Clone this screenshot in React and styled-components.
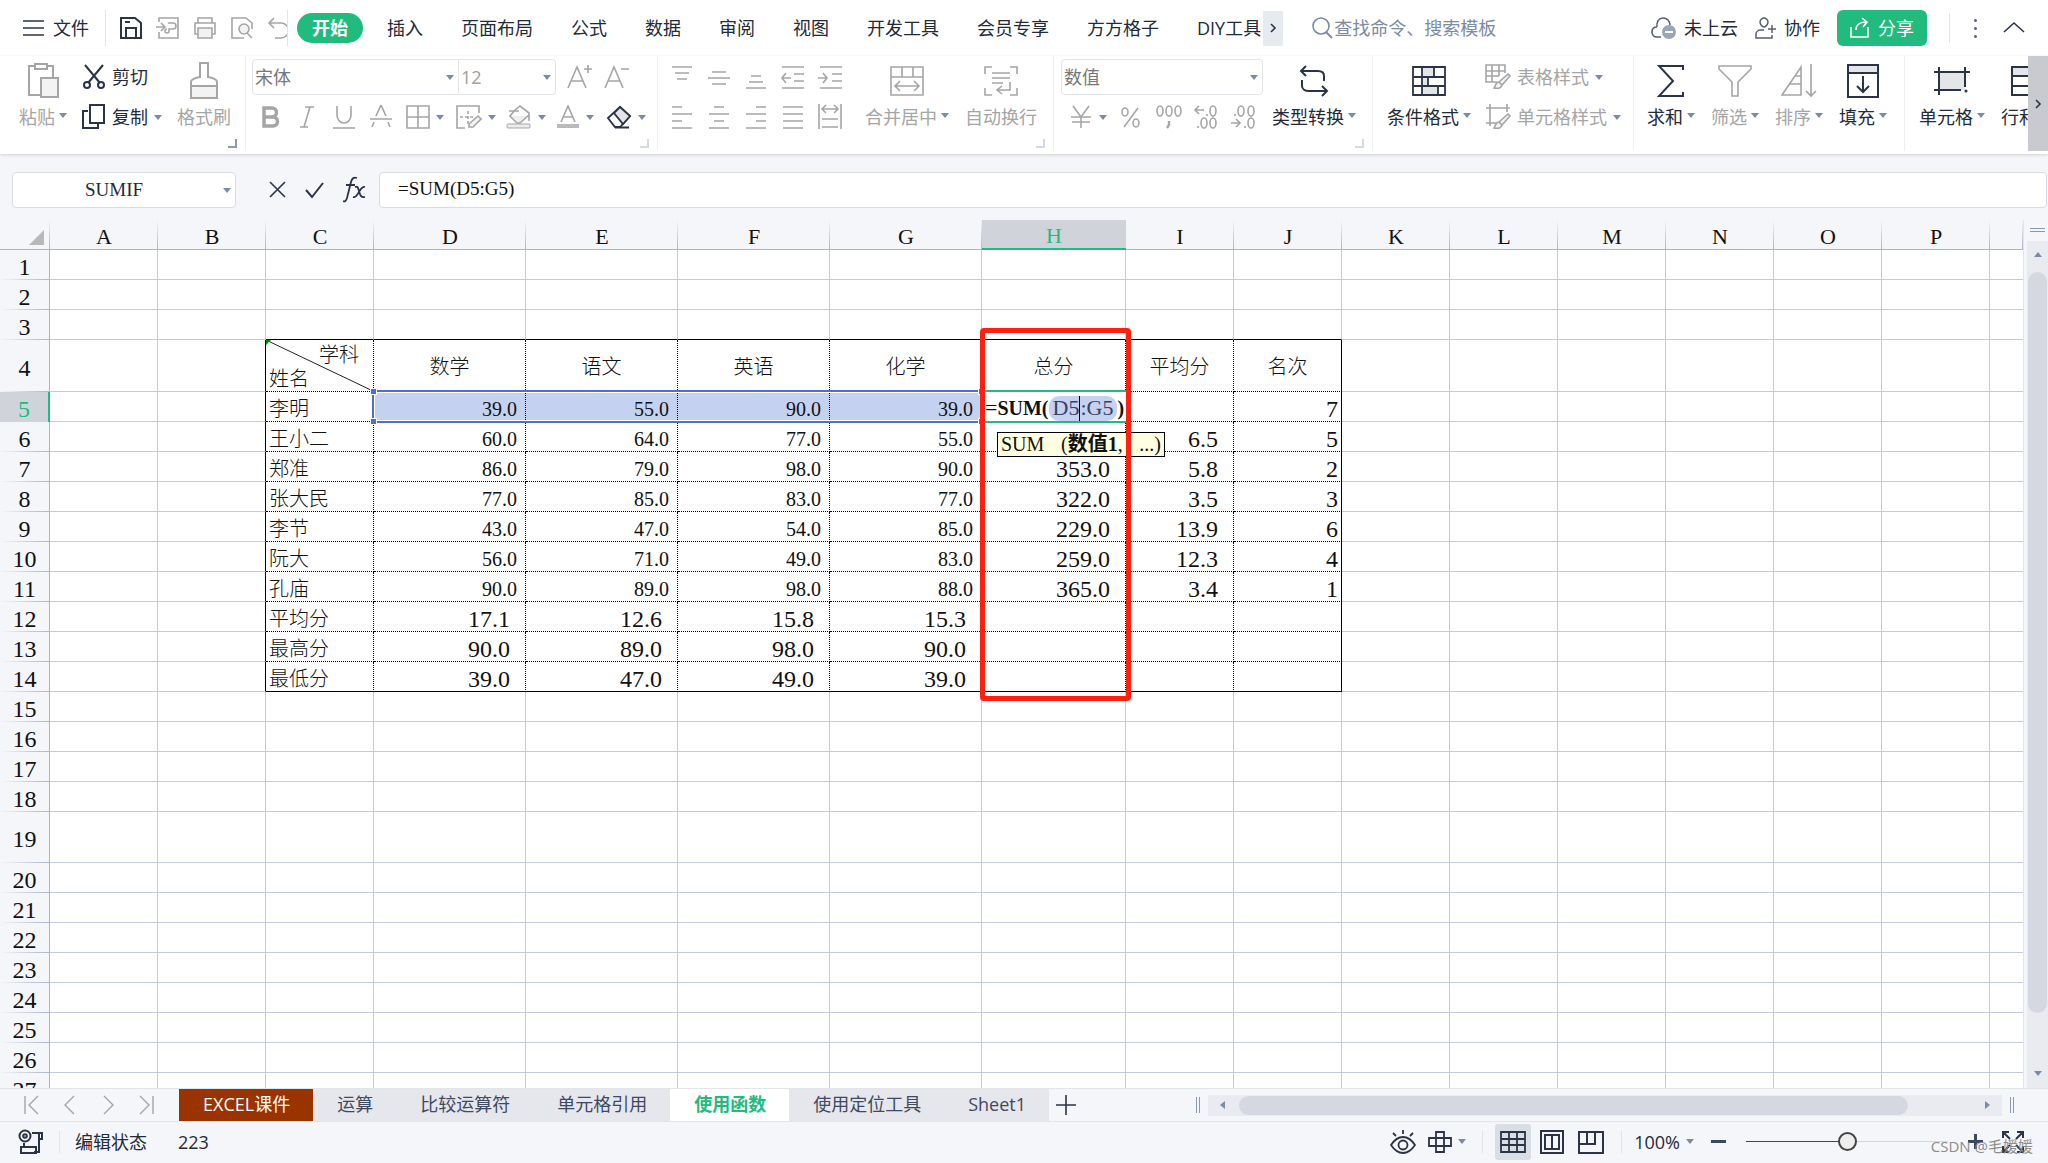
import React from 'react'
import styled, { createGlobalStyle, css } from 'styled-components'

const COLORS = {
  GREEN: '#21bb7e',
  TEXT: '#232a3a',
  DISABLED: '#a5a5a5',
  MUTED: '#7c8aa5',
  DARK: '#2b3347',
  PANEL: '#f5f6f9',
  LINE: '#e2e4ea',
  GRID: '#c4cadb',
  HEADER_LINE: '#adb4c9',
  ACTIVE_HEADER: '#d0d3da',
  RANGE: '#4a70d2',
  RANGE_FILL: '#c5d1f1'
}

const UI_FONT = `"Open Sans", "Noto Sans CJK SC", sans-serif`
const SHEET_FONT = `"Liberation Serif", "Noto Sans CJK SC", serif`

const GlobalStyle = createGlobalStyle`
  * {
    box-sizing: border-box;
  }

  body {
    margin: 0;
    font: 18px/24px ${UI_FONT};
    color: ${COLORS.TEXT};
    background: ${COLORS.PANEL};
  }

  button, input, select {
    margin: 0;
    padding: 0;
    border: 0;
    background: none;
    font: inherit;
    color: inherit;
    outline: none;
  }
`

const Page = styled.div`
  display: flex;
  flex-direction: column;
  height: 100vh;
  overflow: hidden;
`

const Svg = styled.svg`
  display: block;
  flex: none;
  fill: none;
  stroke: ${props => props.$off ? COLORS.DISABLED : COLORS.DARK};
  stroke-width: 2;
`

const ICONS = {
  menu: [24, 24, <path d="M1 5h21M1 12h21M1 19h21" strokeWidth="1.6" />],
  more: [8, 12, <path d="M2 2l4 4-4 4" strokeWidth="1.6" />],
  save: [24, 24, <><path d="M2 2h14l6 5v15H2z" /><path d="M7 22V12h10v10M6 6h5" /></>],
  export: [24, 24, <path d="M3 6V2h19v20H3v-6M0 11h8M5 7l4 4-4 4M12 7h5a3 3 0 0 1 0 6h-4v2a2 2 0 1 1-2-2" strokeWidth="1.6" />],
  print: [24, 24, <><path d="M5 7V2h14v5M5 18H2V7h20v11h-3" strokeWidth="1.6" /><path d="M5 12h14v10H5z" fill="#f2f2f2" strokeWidth="1.6" /></>],
  preview: [24, 24, <><path d="M14 22H2V2h14l6 5v6" strokeWidth="1.6" /><circle cx="14" cy="13" r="5" fill="#f2f2f2" strokeWidth="1.6" /><path d="M17 17l5 5" strokeWidth="1.6" /></>],
  undo: [24, 24, <path d="M7 2L2 7l5 5M3 7h11a7 7 0 0 1 0 15H8" strokeWidth="1.6" />],
  search: [24, 24, <><circle cx="11" cy="10" r="8" stroke={COLORS.MUTED} strokeWidth="1.6" /><path d="M16 16l6 6" stroke={COLORS.MUTED} /></>],
  cloud: [26, 24, <><path d="M10 21H6c-3 0-5-2-5-5s2-5 5-5M6 11c-1-5 2-9 6-9 4 0 7 3 7 7" strokeWidth="1.6" stroke="#555e70" /><circle cx="18" cy="16" r="7" fill="#9aa4b8" stroke="none" /><path d="M14 16h8" stroke="#fff" /></>],
  people: [22, 24, <path d="M9 2c2 0 4 2 4 4s-2 5-4 5-4-3-4-5 2-4 4-4zM9 14H6c-3 0-5 2-5 4v4h16v-3M13 13h8M17 9v8" strokeWidth="1.5" stroke="#555e70" />],
  share: [20, 24, <path d="M1 11v10h17V11M6 14c0-5 4-8 10-8M12 2l5 4-4 5" stroke="#fff" strokeWidth="1.6" />],
  chevronUp: [24, 24, <path d="M2 16L12 7l10 9" strokeWidth="1.6" />],
  paste: [32, 36, <><path d="M9 3H2v29h12M20 3h6v11" /><path d="M8 1h12v5H8z" /><path d="M14 15h17v19H14z" fill="#f3f3f3" /></>],
  cut: [24, 26, <><path d="M3 1l15 18M21 1L6 19" /><circle cx="5" cy="21" r="3" /><circle cx="19" cy="21" r="3" /></>],
  copy: [24, 26, <><path d="M6 7H1v17h15v-4" /><path d="M8 1h14v18H8z" /></>],
  brush: [30, 38, <><path d="M2 24h26v12H2z" fill="#f3f3f3" /><path d="M2 24v-4c0-3 4-4 9-5V1h8v14c5 1 9 2 9 5v4z" /></>],
  fontUp: [26, 26, <path d="M1 24L10 3l9 21M4 17h12M21 1v8M17 5h8" strokeWidth="1.6" />],
  fontDown: [26, 26, <path d="M1 24L10 3l9 21M4 17h12M17 5h8" strokeWidth="1.6" />],
  bold: [24, 24, <path d="M6 3h8a4 4 0 0 1 0 9H6zM6 12h9a4 4 0 0 1 0 9H6z" strokeWidth="3.5" />],
  italic: [24, 24, <path d="M10 2h9M5 22h8M15 2L9 22" strokeWidth="1.6" />],
  underline: [24, 24, <path d="M5 1v9a7 8 0 0 0 14 0V1M1 23h22" strokeWidth="1.6" />],
  strike: [24, 24, <path d="M1 14h22M7 11l5-11 5 11M5 17l-2 5M19 17l2 5" strokeWidth="1.6" />],
  border: [24, 24, <path d="M1 1h22v22H1zM12 1v22M1 12h22" strokeWidth="1.6" />],
  drawBorder: [26, 24, <><path d="M23 8V1H1v22h8" strokeWidth="1.6" /><path d="M12 6v14M4 12h14" strokeDasharray="3 2" strokeWidth="1.6" /><path d="M22 11l3 3-8 8h-4v-3z" fill="#f3f3f3" strokeWidth="1.6" /></>],
  fill: [26, 24, <><path d="M6 11h16l-9 7z" fill="#eee" stroke="none" /><path d="M3 6h10M9 5l5-4 9 7v8M23 10l-9 8h-3l-7-7 5-6" strokeWidth="1.6" /><rect x="1" y="19" width="23" height="4" rx="1" fill="#ececec" strokeWidth="1" /></>],
  fontColor: [24, 24, <><path d="M5 17L12 1l7 16M7 12h10" strokeWidth="1.6" /><path d="M1 21h22" stroke="#b9bbbb" strokeWidth="4" /></>],
  eraser: [26, 24, <><path d="M2 13L14 2l10 9-10 11H9z" strokeWidth="1.8" /><path d="M14 2l10 9-7 8-9-11z" fill="#e3e5e8" strokeWidth="1.8" /><path d="M9 22.5h14" /></>],
  top: [24, 24, <path d="M2 2h20M5 8h14M7 14h10" strokeWidth="1.6" />],
  middle: [24, 24, <path d="M5 7h14M1 13h22M5 19h14" strokeWidth="1.6" />],
  bottom: [24, 24, <path d="M7 11h10M5 17h14M2 23h20" strokeWidth="1.6" />],
  outdent: [24, 24, <path d="M1 2h22M13 9h10M13 16h10M1 23h22M10 13H1M5 8l-4 5 4 5" strokeWidth="1.6" />],
  indent: [24, 24, <path d="M2 2h22M14 9h10M14 16h10M2 23h22M0 13h9M5 8l4 5-4 5" strokeWidth="1.6" />],
  left: [24, 24, <path d="M2 2h10M2 9h20M2 16h10M2 23h20" strokeWidth="1.6" />],
  center: [24, 24, <path d="M7 2h10M2 9h20M7 16h10M2 23h20" strokeWidth="1.6" />],
  right: [24, 24, <path d="M12 2h10M2 9h20M12 16h10M2 23h20" strokeWidth="1.6" />],
  justify: [24, 24, <path d="M2 2h20M2 9h20M2 16h20M2 23h20" strokeWidth="1.6" />],
  distribute: [24, 26, <path d="M1 0v25M23 0v25M5 5h14M8 1L4 5l4 4M16 1l4 4-4 4M4 15h16M4 23h16" strokeWidth="1.6" />],
  merge: [34, 30, <path d="M1 1h32v28H1zM1 11h32M12 1v10M23 1v10M6 20h22M10 15l-5 5 5 5M24 15l5 5-5 5" strokeWidth="1.6" />],
  wrap: [34, 30, <path d="M1 8V1h7M26 1h7v7M1 22v7h7M26 29h7v-7M8 7h18M8 12h18M8 17h11M26 16v8H14M18 20l-5 4 5 4" strokeWidth="1.6" />],
  yen: [24, 24, <path d="M4 1l8 11 8-11M12 12v11M2 12h20M3 17h18" strokeWidth="1.6" />],
  percent: [24, 24, <><ellipse cx="6" cy="7" rx="3" ry="4" strokeWidth="1.6" /><ellipse cx="17" cy="18" rx="3" ry="4" strokeWidth="1.6" /><path d="M19 3L5 22" strokeWidth="1.6" /></>],
  thousands: [26, 26, <><ellipse cx="4" cy="7" rx="3" ry="5" strokeWidth="1.6" /><ellipse cx="13" cy="7" rx="3" ry="5" strokeWidth="1.6" /><ellipse cx="22" cy="7" rx="3" ry="5" strokeWidth="1.6" /><path d="M13 17v4l-2 3" strokeWidth="2.4" /></>],
  addDecimal: [26, 26, <><path d="M11 6H2M6 2L2 6l4 4M14 10v2M5 22v2" strokeWidth="1.6" /><ellipse cx="20" cy="7" rx="3" ry="5" strokeWidth="1.6" /><ellipse cx="11" cy="19" rx="3" ry="5" strokeWidth="1.6" /><ellipse cx="20" cy="19" rx="3" ry="5" strokeWidth="1.6" /></>],
  dropDecimal: [26, 26, <><path d="M1 19h9M6 15l4 4-4 4M5 10v2M15 22v2" strokeWidth="1.6" /><ellipse cx="11" cy="7" rx="3" ry="5" strokeWidth="1.6" /><ellipse cx="21" cy="7" rx="3" ry="5" strokeWidth="1.6" /><ellipse cx="21" cy="19" rx="3" ry="5" strokeWidth="1.6" /></>],
  convert: [30, 32, <path d="M7 1L2 6l5 5M2 6h17c4 0 6 2 6 5v5M23 31l5-5-5-5M27 26H10c-4 0-7-2-7-5v-6" />],
  conditional: [34, 30, <><path d="M10 1h12v9H10zM10 11h6v9h-6zM10 20h17v9H10z" fill="#e3e5e8" stroke="none" /><path d="M1 1h32v28H1zM1 11h32M1 20h32M10 1v28M22 1v10M16 11v9M26 20v9" strokeWidth="1.8" /></>],
  tableStyle: [26, 26, <><path d="M12 18H1V1h19v8M1 7h19M1 12h13M7 1v17M14 1v11" strokeWidth="1.6" /><path d="M23 10l2 2-8 9-3-3zM14 18c-4 0-3 4-5 6 4 1 7 0 8-3" fill="#f3f3f3" strokeWidth="1.6" /></>],
  cellStyle: [26, 26, <><path d="M5 0v22M1 4h24M22 0v8M1 19h10" strokeWidth="1.6" /><path d="M23 10l2 2-8 9-3-3zM14 18c-4 0-3 4-5 6 4 1 7 0 8-3" fill="#f3f3f3" strokeWidth="1.6" /></>],
  sum: [28, 32, <path d="M26 5V1H2l14 15L2 31h24v-4" />],
  filter: [34, 32, <><path d="M1 1h32v3L20 17v14h-6V17L1 4z" strokeWidth="1.6" /></>],
  sort: [36, 34, <path d="M1 31L20 3v28zM14 12h6M9 20h11M30 0v31M25 27l5 5 5-5" strokeWidth="1.6" />],
  fillDown: [32, 34, <><path d="M1 1h30v8H1z" fill="#e3e5e8" /><path d="M1 9h30v24H1zM16 12v16M10 22l6 6 6-6" /></>],
  cells: [36, 30, <><path d="M5 6h26v18H5z" fill="#e3e5e8" stroke="none" /><path d="M5 1v28M31 1v20M0 6h36M0 24h27" /><circle cx="32" cy="25" r="1.5" fill={COLORS.DARK} stroke="none" /></>],
  rowsCols: [34, 30, <><path d="M1 1h32v9H1z" fill="#e3e5e8" /><path d="M1 1h32v28H1zM1 10h32M1 20h32" /></>],
  cancel: [18, 18, <path d="M1 1l15 15M16 1L1 16" strokeWidth="1.6" />],
  accept: [20, 18, <path d="M1 9l6 7L18 2" />],
  fx: [24, 28, <path d="M14 2c-3-1-5 0-6 4L4 22c-1 3-2 4-4 3M3 9h9M12 11c3-1 3 1 4 4 1 4 2 7 6 6M22 11c-3-1-4 2-6 5s-3 6-6 5" strokeWidth="1.8" />],
  first: [16, 20, <path d="M1 1v18M14 1L5 10l9 9" strokeWidth="1.4" />],
  prev: [16, 20, <path d="M12 1L3 10l9 9" strokeWidth="1.4" />],
  next: [16, 20, <path d="M4 1l9 9-9 9" strokeWidth="1.4" />],
  last: [16, 20, <path d="M15 1v18M2 1l9 9-9 9" strokeWidth="1.4" />],
  plus: [20, 20, <path d="M10 0v20M0 10h20" strokeWidth="1.6" />],
  macro: [26, 26, <><circle cx="7" cy="7" r="5.5" /><circle cx="7" cy="7" r="1.8" /><path d="M14 4h10v6h-3M21 5v18h-5M3 18h15v6H3zM6 14v4" /></>],
  eye: [26, 26, <><path d="M1 16c4-6 8-8 12-8s8 2 12 8c-4 6-8 8-12 8s-8-2-12-8zM13 1v4M3 4l3 3M23 4l-3 3" strokeWidth="1.8" /><circle cx="13" cy="16" r="4.5" strokeWidth="1.8" /></>],
  cross: [24, 22, <path d="M8 1h8v20H8zM1 7h22v8H1z" strokeWidth="1.8" />],
  grid: [26, 22, <path d="M1 1h24v20H1zM1 8h24M1 14h24M9 1v20M17 1v20" strokeWidth="1.8" />],
  pageView: [24, 24, <path d="M1 1h22v22H1zM5 5h14v14H5zM12 5v14" />],
  splitView: [26, 24, <path d="M1 2h24v21H1zM1 2v12h16V2M9 2v12" />],
  full: [22, 22, <path d="M1 7V1h6M15 1h6v6M1 15v6h6M15 21h6v-6M1 1l7 7M21 1l-7 7M1 21l7-7M21 21l-7-7" />]
}

const Icon = ({ name, off }) => {
  const [width, height, shape] = ICONS[name]
  return (
    <Svg $off={off} width={width} height={height} viewBox={`0 0 ${width} ${height}`} aria-hidden="true">
      {shape}
    </Svg>
  )
}

const ARROWS = {
  down: css`border-width: 5px 4px 0; border-top-color: ${COLORS.MUTED};`,
  up: css`border-width: 0 4px 5px; border-bottom-color: ${COLORS.MUTED};`,
  left: css`border-width: 4px 5px 4px 0; border-right-color: ${COLORS.MUTED};`,
  right: css`border-width: 4px 0 4px 5px; border-left-color: ${COLORS.MUTED};`
}

const Arrow = styled.span`
  flex: none;
  width: 0;
  height: 0;
  border: solid transparent;
  ${props => ARROWS[props.$dir || 'down']}
`

const Divider = styled.span`
  flex: none;
  width: 1px;
  height: ${props => props.$height}px;
  background: ${COLORS.LINE};
`

/* Menu bar */

const MenuBar = styled.header`
  flex: none;
  display: flex;
  align-items: center;
  height: 56px;
  padding: 0 22px;
  background: #fff;
  white-space: nowrap;
`

const MenuButton = styled.button`
  display: flex;
  align-items: center;
  gap: 7px;
`

const IconButton = styled.button`
  flex: none;
  display: flex;
  align-items: center;
  gap: 6px;
  width: ${props => props.$wide ? 50 : 37}px;
  height: 36px;
  padding-left: 6px;
`

const QuickAccess = styled.div`
  display: flex;
  width: 183px;
  margin: 0 9px 0 16px;
  padding-left: 7px;
  overflow: hidden;
  border-left: 1px solid ${COLORS.LINE};
  border-right: 1px solid ${COLORS.LINE};
`

const MenuTabs = styled.nav`
  display: flex;
  align-items: center;
`

const MenuTab = styled.button`
  height: 30px;
  padding: 0 19px;

  &:last-child {
    padding-right: 2px;
  }

  ${props => props.$active && css`
    padding: 0 15px;
    margin-right: 5px;
    border-radius: 15px;
    background: ${COLORS.GREEN};
    color: #fff;
    font-weight: 700;
  `}
`

const MoreTabs = styled.button`
  display: flex;
  align-items: center;
  justify-content: center;
  width: 20px;
  height: 35px;
  background: #e7eaef;
`

const Search = styled.label`
  display: flex;
  align-items: center;
  margin-left: 27px;
`

const SearchInput = styled.input`
  width: 200px;

  &::placeholder {
    color: ${COLORS.MUTED};
    opacity: 1;
  }
`

const MenuRight = styled.div`
  display: flex;
  align-items: center;
  gap: 17px;
  margin-left: auto;
`

const ShareButton = styled.button`
  display: flex;
  align-items: center;
  justify-content: center;
  gap: 8px;
  width: 90px;
  height: 36px;
  margin-right: 5px;
  border-radius: 6px;
  background: ${COLORS.GREEN};
  color: #fff;
`

const Dots = styled.button`
  display: flex;
  flex-direction: column;
  gap: 5px;
  margin: 0 8px 0 7px;

  span {
    width: 3px;
    height: 3px;
    border-radius: 50%;
    background: #5c6475;
  }
`

/* Ribbon */

const Ribbon = styled.div`
  flex: none;
  display: flex;
  height: 98px;
  padding-bottom: 3px;
  background: #fff;
  box-shadow: 0 1px 3px rgba(0, 0, 0, 0.16);
  white-space: nowrap;
  z-index: 1;
`

const RibbonGroups = styled.div`
  flex: 1;
  min-width: 0;
  display: flex;
  overflow: hidden;
`

const RibbonScroll = styled.button`
  flex: none;
  display: flex;
  align-items: center;
  justify-content: center;
  width: 20px;
  background: #c8cad0;
`

const Group = styled.section`
  flex: none;
  position: relative;
  display: flex;
  align-items: flex-start;
  gap: ${props => props.$gap}px;
  padding: 3px ${props => props.$right}px 0 ${props => props.$left}px;
  border-right: 1px solid #eceef2;

  &::after {
    content: '';
    display: ${props => props.$corner ? 'block' : 'none'};
    position: absolute;
    right: 8px;
    bottom: 3px;
    width: 7px;
    height: 7px;
    border: solid ${props => props.$corner};
    border-width: 0 2px 2px 0;
  }
`

const Stack = styled.div`
  display: flex;
  flex-direction: column;
  gap: 4px;
`

const Row = styled.div`
  display: flex;
  align-items: center;
  height: 36px;
  padding-left: ${props => props.$left || 0}px;
`

const BigButton = styled.button`
  display: flex;
  flex-direction: column;
  align-items: center;
  gap: 4px;
  padding-top: 2px;
  color: ${props => props.$off ? COLORS.DISABLED : COLORS.TEXT};
`

const BigIcon = styled.span`
  display: flex;
  align-items: center;
  height: 40px;
`

const BigLabel = styled.span`
  display: flex;
  align-items: center;
  gap: 4px;

  ${Arrow} {
    margin-bottom: 4px;
  }
`

const SmallButton = styled.button`
  display: flex;
  align-items: center;
  gap: 6px;
  height: 36px;
  color: ${props => props.$off ? COLORS.DISABLED : COLORS.TEXT};
`

const SelectBox = styled.label`
  display: flex;
  align-items: center;
  width: ${props => props.$width}px;
  height: 36px;
  padding-right: 4px;
  border: 1px solid ${COLORS.LINE};
  border-radius: ${props => props.$radius || '4px'};
  color: #777;

  & + & {
    border-left: 0;
    color: #a0a0a0;
  }
`

const Select = styled.select`
  flex: 1;
  min-width: 0;
  height: 34px;
  padding-left: 2px;
  appearance: none;
`

const FontRow = styled(Row)`
  gap: 11px;
`

const FontBoxes = styled.div`
  display: flex;
`

const Big = ({ icon, label, off, menu }) => (
  <BigButton $off={off}>
    <BigIcon><Icon name={icon} off={off} /></BigIcon>
    <BigLabel>{label}{menu && <Arrow />}</BigLabel>
  </BigButton>
)

const Small = ({ icon, label, off, menu }) => (
  <SmallButton $off={off}>
    <Icon name={icon} off={off} />
    {label}
    {menu && <Arrow />}
  </SmallButton>
)

const Tool = ({ icon, label, menu, off = true }) => (
  <IconButton $wide={menu} aria-label={label}>
    <Icon name={icon} off={off} />
    {menu && <Arrow />}
  </IconButton>
)

/* Formula bar */

const FormulaBar = styled.div`
  flex: none;
  display: flex;
  align-items: center;
  height: 66px;
  padding: 6px 1px 0 12px;
  font: 19px/24px ${SHEET_FONT};
`

const NameBox = styled.label`
  display: flex;
  align-items: center;
  width: 224px;
  height: 36px;
  padding: 0 4px 0 0;
  border: 1px solid #d9dce3;
  border-radius: 4px;
  background: #fff;

  input {
    flex: 1;
    min-width: 0;
    padding-right: 8px;
    text-align: center;
  }
`

const FormulaButtons = styled.div`
  display: flex;
  align-items: center;
  gap: 18px;
  margin: 0 12px 0 33px;
`

const PlainButton = styled.button`
  display: flex;
  align-items: center;
`

const FormulaInput = styled.input`
  flex: 1;
  min-width: 0;
  height: 36px;
  padding: 0 18px 2px;
  border: 1px solid #d9dce3;
  border-radius: 4px;
  background: #fff;
  color: #111;
`

/* Sheet */

const SheetArea = styled.main`
  flex: 1;
  min-height: 0;
  display: flex;
`

const SheetView = styled.div`
  flex: 1;
  min-width: 0;
  overflow: hidden;
  background: #fff;
`

const Table = styled.table`
  width: 100%;
  table-layout: fixed;
  border-collapse: separate;
  border-spacing: 0;
  font: 24px/24px ${SHEET_FONT};
  color: #111;
  white-space: nowrap;
`

const HeadCell = styled.th`
  height: 30px;
  padding: 5px 0 0;
  border-bottom: 1px solid ${COLORS.HEADER_LINE};
  background: linear-gradient(${COLORS.PANEL}, ${COLORS.HEADER_LINE}) right / 1px 100% no-repeat ${COLORS.PANEL};
  font-size: 22px;
  font-weight: 400;

  ${props => props.$active && css`
    padding-top: 4px;
    border-bottom: 2px solid ${COLORS.GREEN};
    background: ${COLORS.ACTIVE_HEADER};
    color: ${COLORS.GREEN};
  `}
`

const SelectAll = styled.span`
  display: block;
  width: 0;
  margin: 0 6px 0 auto;
  border: solid transparent;
  border-width: 0 0 15px 15px;
  border-bottom-color: #b8b8b8;
`

const RowHead = styled.th`
  height: ${props => props.$height}px;
  padding: 3px 0 0;
  border-right: 1px solid ${COLORS.HEADER_LINE};
  background: linear-gradient(to right, ${COLORS.PANEL}, ${COLORS.HEADER_LINE}) bottom / 100% 1px no-repeat ${COLORS.PANEL};
  font-weight: 400;

  ${props => props.$active && css`
    border-right: 2px solid ${COLORS.GREEN};
    background: ${COLORS.ACTIVE_HEADER};
    color: ${COLORS.GREEN};
  `}
`

const CELL_KINDS = {
  title: css`padding-top: 2px; text-align: center; vertical-align: middle; font-size: 20px; font-weight: 300;`,
  name: css`padding-left: 3px; font-size: 20px; font-weight: 300;`,
  score: css`padding-right: 8px; text-align: right; font-size: 20px;`,
  stat: css`padding-right: 15px; text-align: right;`,
  rank: css`padding-right: 3px; text-align: right;`,
  corner: css`padding: 2px 14px 0 3px; font-size: 20px; font-weight: 300; vertical-align: middle;`
}

const Cell = styled.td`
  position: relative;
  padding: 5px 0 0;
  vertical-align: bottom;
  border-right: ${props => props.$right};
  border-bottom: ${props => props.$bottom};
  background: ${props => props.$picked ? COLORS.RANGE_FILL : '#fff'};
  ${props => CELL_KINDS[props.$kind]}
`

const CornerLabel = styled.div`
  text-align: ${props => props.$right ? 'right' : 'left'};
`

const Diagonal = styled.svg`
  position: absolute;
  inset: 0;
  width: 100%;
  height: 100%;
`

const RangeFrame = styled.div`
  position: absolute;
  z-index: 1;
  top: -2px;
  left: -2px;
  width: 611px;
  height: 33px;
  border: 2px solid ${COLORS.RANGE};
  box-shadow: inset 0 0 0 1px #fff;
`

const Handle = styled.i`
  position: absolute;
  width: 5px;
  height: 5px;
  outline: 1px solid #fff;
  background: ${COLORS.RANGE};
  ${props => props.$y}: -3px;
  ${props => props.$x}: -3px;
`

const EditFrame = styled.div`
  position: absolute;
  z-index: 1;
  top: -2px;
  left: 0;
  right: -1px;
  height: 33px;
  display: flex;
  align-items: center;
  padding: 3px 0 0 3px;
  border: solid ${COLORS.GREEN};
  border-width: 2px 0;
  background: #fff;
  font-size: 22px;

  b {
    font-size: 20px;
  }
`

const RangeChip = styled.span`
  display: flex;
  height: 25px;
  padding: 0 4px;
  border-radius: 10px;
  background: ${COLORS.RANGE_FILL};
  color: #38425e;
`

const TextCursor = styled.i`
  width: 1px;
  background: #000;
`

const Hint = styled.div`
  position: absolute;
  z-index: 2;
  top: 40px;
  left: 15px;
  width: 168px;
  height: 25px;
  display: flex;
  justify-content: space-between;
  padding: 0 3px;
  border: 1px solid #000;
  background: #ffffe1;
  font-size: 20px;
  line-height: 23px;
`

const RedFrame = styled.div`
  position: absolute;
  z-index: 3;
  top: -12px;
  left: -2px;
  width: 151px;
  height: 373px;
  border: 5px solid #ff2010;
  border-radius: 4px;
`

const VerticalRail = styled.aside`
  flex: none;
  display: flex;
  flex-direction: column;
  align-items: flex-end;
  width: 25px;
  border-left: 1px solid ${COLORS.LINE};
`

const SplitHandle = styled.span`
  flex: none;
  border: solid #8b99b0;
  ${props => props.$vertical
    ? css`width: 4px; height: 16px; border-width: 0 1px;`
    : css`width: 15px; height: 4px; margin: 8px 3px 9px; border-width: 1px 0;`}
`

const ScrollTrack = styled.div`
  flex: 1;
  display: flex;
  align-items: center;
  background: #e9ebf0;
  ${props => props.$vertical
    ? css`flex-direction: column; width: 21px; padding: 11px 1px 12px; gap: 15px;`
    : css`height: 21px; padding: 0 12px; gap: 14px;`}
`

const ScrollThumb = styled.div`
  flex: ${props => props.$size};
  border-radius: 10px;
  background: #d5d8e0;
  ${props => props.$vertical ? 'width: 19px;' : 'height: 19px;'}
`

const ScrollRest = styled.div`
  flex: ${props => props.$size};
`

/* Sheet tabs and status bar */

const TabBar = styled.footer`
  flex: none;
  display: flex;
  align-items: center;
  height: 34px;
  border: solid ${COLORS.LINE};
  border-width: 1px 0;
  white-space: nowrap;
`

const TabNav = styled.div`
  display: flex;
  gap: 22px;
  padding: 0 25px 0 24px;
`

const SheetTabs = styled.div`
  display: flex;
  height: 32px;
  background: #e5e7ed;
`

const SheetTab = styled.button`
  padding: 0 23px 2px 24px;
  color: #3f4960;

  ${props => props.$marked && css`
    background: #993300;
    color: #fff;
  `}

  ${props => props.$active && css`
    background: #fff;
    color: ${COLORS.GREEN};
    font-weight: 700;
  `}
`

const AddTab = styled(PlainButton)`
  margin-left: 7px;
`

const HorizontalScroll = styled.div`
  flex: 1;
  display: flex;
  align-items: center;
  gap: 8px;
  margin-left: 120px;
  padding-right: 34px;
`

const StatusBar = styled.footer`
  flex: none;
  position: relative;
  display: flex;
  align-items: center;
  justify-content: space-between;
  height: 41px;
  padding: 0 24px 2px 18px;
  white-space: nowrap;
`

const StatusSide = styled.div`
  display: flex;
  align-items: center;
  gap: ${props => props.$gap}px;
`

const StatusText = styled.span`
  margin-right: 16px;
`

const StatusButton = styled.button`
  display: flex;
  align-items: center;
  justify-content: center;
  gap: 6px;
`

const ReadButton = styled(StatusButton)`
  margin-right: 4px;
`

const ViewButton = styled(StatusButton)`
  width: 36px;
  height: 36px;
  border-radius: 3px;
  background: ${props => props.$active ? '#d9dde4' : 'none'};
`

const ZoomControl = styled(StatusSide)`
  margin: 0 7px 0 5px;
`

const ZoomSign = styled.span`
  width: 15px;
  height: 15px;
  background: linear-gradient(#3b4862, #3b4862) center / 15px 3px no-repeat
    ${props => props.$plus ? ', linear-gradient(#3b4862, #3b4862) center / 3px 15px no-repeat' : ''};
`

const ZoomRange = styled.input`
  width: 202px;
  height: 20px;
  appearance: none;
  background: linear-gradient(to right, #3b4862 50%, #d3d7e0 50%) center / 100% 1px no-repeat;

  &::-webkit-slider-thumb {
    appearance: none;
    width: 19px;
    height: 19px;
    border: 2px solid #444;
    border-radius: 50%;
    background: #eee;
  }
`

const Watermark = styled.span`
  position: absolute;
  right: 15px;
  bottom: 5px;
  font-size: 15px;
  color: #8c8c8c;
`

const COLUMNS = 'ABCDEFGHIJKLMNOP'.split('')
const COLUMN_WIDTHS = { D: 152, E: 152, F: 152, G: 152, H: 144 }
const ROW_HEIGHTS = { 4: 52, 19: 51 }
const ROWS = Array.from({ length: 27 }, (_, i) => i + 1)
const TABLE_COLUMNS = 'CDEFGHIJ'

const DATA = {
  4: ['', '数学', '语文', '英语', '化学', '总分', '平均分', '名次'],
  5: ['李明', '39.0', '55.0', '90.0', '39.0', '', '', '7'],
  6: ['王小二', '60.0', '64.0', '77.0', '55.0', '256.0', '6.5', '5'],
  7: ['郑准', '86.0', '79.0', '98.0', '90.0', '353.0', '5.8', '2'],
  8: ['张大民', '77.0', '85.0', '83.0', '77.0', '322.0', '3.5', '3'],
  9: ['李节', '43.0', '47.0', '54.0', '85.0', '229.0', '13.9', '6'],
  10: ['阮大', '56.0', '71.0', '49.0', '83.0', '259.0', '12.3', '4'],
  11: ['孔庙', '90.0', '89.0', '98.0', '88.0', '365.0', '3.4', '1'],
  12: ['平均分', '17.1', '12.6', '15.8', '15.3'],
  13: ['最高分', '90.0', '89.0', '98.0', '90.0'],
  14: ['最低分', '39.0', '47.0', '49.0', '39.0']
}

const getKind = (column, row) => {
  if (row === 4) return column === 'C' ? 'corner' : 'title'
  if (column === 'C') return 'name'
  if (column === 'J') return 'rank'
  if (column === 'H' || column === 'I' || row > 11) return 'stat'
  return 'score'
}

const getBorders = (column, row) => {
  const light = `1px solid ${COLORS.GRID}`
  const dotted = '1px dotted #000'
  const solid = '1px solid #000'
  const inColumns = TABLE_COLUMNS.includes(column)
  const inRows = row >= 4 && row <= 14
  return {
    $right: inRows && (column === 'B' || column === 'J') ? solid : inRows && inColumns ? dotted : light,
    $bottom: inColumns && (row === 3 || row === 14) ? solid : inRows && inColumns ? dotted : light
  }
}

const CellContent = ({ column, row }) => {
  const name = column + row

  if (name === 'C4') {
    return (
      <>
        <Diagonal viewBox="0 0 107 51" preserveAspectRatio="none">
          <path d="M0 0L107 51" stroke="#222" />
          <path d="M0 0h5L0 5z" fill="#0a8a0a" />
        </Diagonal>
        <CornerLabel $right>学科</CornerLabel>
        <CornerLabel>姓名</CornerLabel>
      </>
    )
  }

  if (name === 'H5') {
    return (
      <>
        <EditFrame>
          =<b>SUM(</b>
          <RangeChip>D5<TextCursor />:G5</RangeChip>
          <b>)</b>
        </EditFrame>
        <Hint>
          <span>SUM</span>
          <span>(<b>数值1</b>,</span>
          <span>...)</span>
        </Hint>
      </>
    )
  }

  return (
    <>
      {DATA[row] && DATA[row][TABLE_COLUMNS.indexOf(column)]}
      {name === 'D5' &&
        <RangeFrame>
          <Handle $y="top" $x="left" />
          <Handle $y="bottom" $x="left" />
          <Handle $y="top" $x="right" />
          <Handle $y="bottom" $x="right" />
        </RangeFrame>
      }
      {name === 'H4' && <RedFrame />}
    </>
  )
}

const Sheet = () => (
  <Table>
    <colgroup>
      <col width="50" />
      {COLUMNS.map(column => <col key={column} width={COLUMN_WIDTHS[column] || 108} />)}
      <col />
    </colgroup>
    <thead>
      <tr>
        <HeadCell><SelectAll /></HeadCell>
        {COLUMNS.map(column => <HeadCell key={column} $active={column === 'H'}>{column}</HeadCell>)}
        <HeadCell />
      </tr>
    </thead>
    <tbody>
      {ROWS.map(row => (
        <tr key={row}>
          <RowHead $height={ROW_HEIGHTS[row] || 30} $active={row === 5}>{row}</RowHead>
          {COLUMNS.map(column => (
            <Cell
              key={column}
              $kind={TABLE_COLUMNS.includes(column) ? getKind(column, row) : null}
              $picked={row === 5 && 'DEFG'.includes(column)}
              {...getBorders(column, row)}
            >
              {TABLE_COLUMNS.includes(column) && <CellContent column={column} row={row} />}
            </Cell>
          ))}
          <Cell $right="0" $bottom={`1px solid ${COLORS.GRID}`} />
        </tr>
      ))}
    </tbody>
  </Table>
)

const MENU = ['开始', '插入', '页面布局', '公式', '数据', '审阅', '视图', '开发工具', '会员专享', '方方格子', 'DIY工具']
const SHEETS = ['EXCEL课件', '运算', '比较运算符', '单元格引用', '使用函数', '使用定位工具', 'Sheet1']

const App = () => (
  <Page>
    <GlobalStyle />
    <MenuBar>
      <MenuButton><Icon name="menu" />文件</MenuButton>
      <QuickAccess>
        <Tool icon="save" label="保存" off={false} />
        <Tool icon="export" label="输出" />
        <Tool icon="print" label="打印" />
        <Tool icon="preview" label="打印预览" />
        <Tool icon="undo" label="撤销" />
      </QuickAccess>
      <MenuTabs>
        {MENU.map((item, i) => <MenuTab key={item} $active={i === 0}>{item}</MenuTab>)}
      </MenuTabs>
      <MoreTabs aria-label="更多选项卡"><Icon name="more" /></MoreTabs>
      <Search>
        <Icon name="search" />
        <SearchInput placeholder="查找命令、搜索模板" aria-label="查找命令" />
      </Search>
      <MenuRight>
        <MenuButton><Icon name="cloud" />未上云</MenuButton>
        <MenuButton><Icon name="people" />协作</MenuButton>
        <ShareButton><Icon name="share" />分享</ShareButton>
        <Divider $height={30} />
        <Dots aria-label="更多"><span /><span /><span /></Dots>
        <PlainButton aria-label="收起"><Icon name="chevronUp" /></PlainButton>
      </MenuRight>
    </MenuBar>

    <Ribbon>
      <RibbonGroups>
        <Group $gap={15} $left={19} $right={14} $corner="#8d9ab5">
          <Big icon="paste" label="粘贴" off menu />
          <Stack>
            <Small icon="cut" label="剪切" />
            <Small icon="copy" label="复制" menu />
          </Stack>
          <Big icon="brush" label="格式刷" off />
        </Group>

        <Group $gap={0} $left={6} $right={7} $corner="#d3dae6">
          <Stack>
            <FontRow>
              <FontBoxes>
                <SelectBox $width={207} $radius="4px 0 0 4px">
                  <Select aria-label="字体"><option>宋体</option></Select>
                  <Arrow />
                </SelectBox>
                <SelectBox $width={97} $radius="0 4px 4px 0">
                  <Select aria-label="字号"><option>12</option></Select>
                  <Arrow />
                </SelectBox>
              </FontBoxes>
              <PlainButton aria-label="增大字号"><Icon name="fontUp" off /></PlainButton>
              <PlainButton aria-label="减小字号"><Icon name="fontDown" off /></PlainButton>
            </FontRow>
            <Row>
              <Tool icon="bold" label="加粗" />
              <Tool icon="italic" label="倾斜" />
              <Tool icon="underline" label="下划线" />
              <Tool icon="strike" label="删除线" />
              <Tool icon="border" label="边框" menu />
              <Tool icon="drawBorder" label="绘制边框" menu />
              <Tool icon="fill" label="填充颜色" menu />
              <Tool icon="fontColor" label="字体颜色" menu />
              <Tool icon="eraser" label="清除" menu off={false} />
            </Row>
          </Stack>
        </Group>

        <Group $gap={16} $left={6} $right={16} $corner="#d3dae6">
          <Stack>
            <Row>
              <Tool icon="top" label="顶端对齐" />
              <Tool icon="middle" label="垂直居中" />
              <Tool icon="bottom" label="底端对齐" />
              <Tool icon="outdent" label="减少缩进" />
              <Tool icon="indent" label="增加缩进" />
            </Row>
            <Row>
              <Tool icon="left" label="左对齐" />
              <Tool icon="center" label="水平居中" />
              <Tool icon="right" label="右对齐" />
              <Tool icon="justify" label="两端对齐" />
              <Tool icon="distribute" label="分散对齐" />
            </Row>
          </Stack>
          <Big icon="merge" label="合并居中" off menu />
          <Big icon="wrap" label="自动换行" off />
        </Group>

        <Group $gap={9} $left={7} $right={16} $corner="#d3dae6">
          <Stack>
            <SelectBox $width={202}>
              <Select aria-label="数字格式"><option>数值</option></Select>
              <Arrow />
            </SelectBox>
            <Row $left={2}>
              <Tool icon="yen" label="货币" menu />
              <Tool icon="percent" label="百分比" />
              <Tool icon="thousands" label="千位分隔" />
              <Tool icon="addDecimal" label="增加小数位" />
              <Tool icon="dropDecimal" label="减少小数位" />
            </Row>
          </Stack>
          <Big icon="convert" label="类型转换" menu />
        </Group>

        <Group $gap={14} $left={14} $right={12}>
          <Big icon="conditional" label="条件格式" menu />
          <Stack>
            <Small icon="tableStyle" label="表格样式" off menu />
            <Small icon="cellStyle" label="单元格样式" off menu />
          </Stack>
        </Group>

        <Group $gap={16} $left={13} $right={17}>
          <Big icon="sum" label="求和" menu />
          <Big icon="filter" label="筛选" off menu />
          <Big icon="sort" label="排序" off menu />
          <Big icon="fillDown" label="填充" menu />
        </Group>

        <Group $gap={16} $left={14} $right={14}>
          <Big icon="cells" label="单元格" menu />
          <Big icon="rowsCols" label="行和列" />
        </Group>
      </RibbonGroups>
      <RibbonScroll aria-label="向右滚动"><Icon name="more" /></RibbonScroll>
    </Ribbon>

    <FormulaBar>
      <NameBox>
        <input defaultValue="SUMIF" aria-label="名称框" />
        <Arrow />
      </NameBox>
      <FormulaButtons>
        <PlainButton aria-label="取消"><Icon name="cancel" /></PlainButton>
        <PlainButton aria-label="输入"><Icon name="accept" /></PlainButton>
        <PlainButton aria-label="插入函数"><Icon name="fx" /></PlainButton>
      </FormulaButtons>
      <FormulaInput defaultValue="=SUM(D5:G5)" aria-label="编辑栏" />
    </FormulaBar>

    <SheetArea>
      <SheetView><Sheet /></SheetView>
      <VerticalRail>
        <SplitHandle />
        <ScrollTrack $vertical>
          <Arrow $dir="up" />
          <ScrollThumb $vertical $size={742} />
          <ScrollRest $size={28} />
          <Arrow />
        </ScrollTrack>
      </VerticalRail>
    </SheetArea>

    <TabBar>
      <TabNav>
        <PlainButton aria-label="第一张"><Icon name="first" off /></PlainButton>
        <PlainButton aria-label="上一张"><Icon name="prev" off /></PlainButton>
        <PlainButton aria-label="下一张"><Icon name="next" off /></PlainButton>
        <PlainButton aria-label="最后一张"><Icon name="last" off /></PlainButton>
      </TabNav>
      <SheetTabs>
        {SHEETS.map(name => (
          <SheetTab key={name} $marked={name === 'EXCEL课件'} $active={name === '使用函数'}>{name}</SheetTab>
        ))}
      </SheetTabs>
      <AddTab aria-label="新建工作表"><Icon name="plus" /></AddTab>
      <HorizontalScroll>
        <SplitHandle $vertical />
        <ScrollTrack>
          <Arrow $dir="left" />
          <ScrollThumb $size={668} />
          <ScrollRest $size={49} />
          <Arrow $dir="right" />
        </ScrollTrack>
        <SplitHandle $vertical />
      </HorizontalScroll>
    </TabBar>

    <StatusBar>
      <StatusSide $gap={15}>
        <Icon name="macro" />
        <Divider $height={22} />
        <StatusText>编辑状态</StatusText>
        <span>223</span>
      </StatusSide>
      <StatusSide $gap={12}>
        <StatusButton aria-label="护眼模式"><Icon name="eye" /></StatusButton>
        <ReadButton aria-label="阅读模式"><Icon name="cross" /><Arrow /></ReadButton>
        <Divider $height={22} />
        <StatusSide $gap={3}>
          <ViewButton $active aria-label="普通视图"><Icon name="grid" /></ViewButton>
          <ViewButton aria-label="页面布局"><Icon name="pageView" /></ViewButton>
          <ViewButton aria-label="分页预览"><Icon name="splitView" /></ViewButton>
        </StatusSide>
        <Divider $height={22} />
        <StatusButton>100%<Arrow /></StatusButton>
        <ZoomControl $gap={20}>
          <StatusButton aria-label="缩小"><ZoomSign /></StatusButton>
          <ZoomRange type="range" aria-label="显示比例" defaultValue={50} />
          <StatusButton aria-label="放大"><ZoomSign $plus /></StatusButton>
        </ZoomControl>
        <StatusButton aria-label="全屏"><Icon name="full" /></StatusButton>
      </StatusSide>
      <Watermark>CSDN @毛媛媛</Watermark>
    </StatusBar>
  </Page>
)

export default App
